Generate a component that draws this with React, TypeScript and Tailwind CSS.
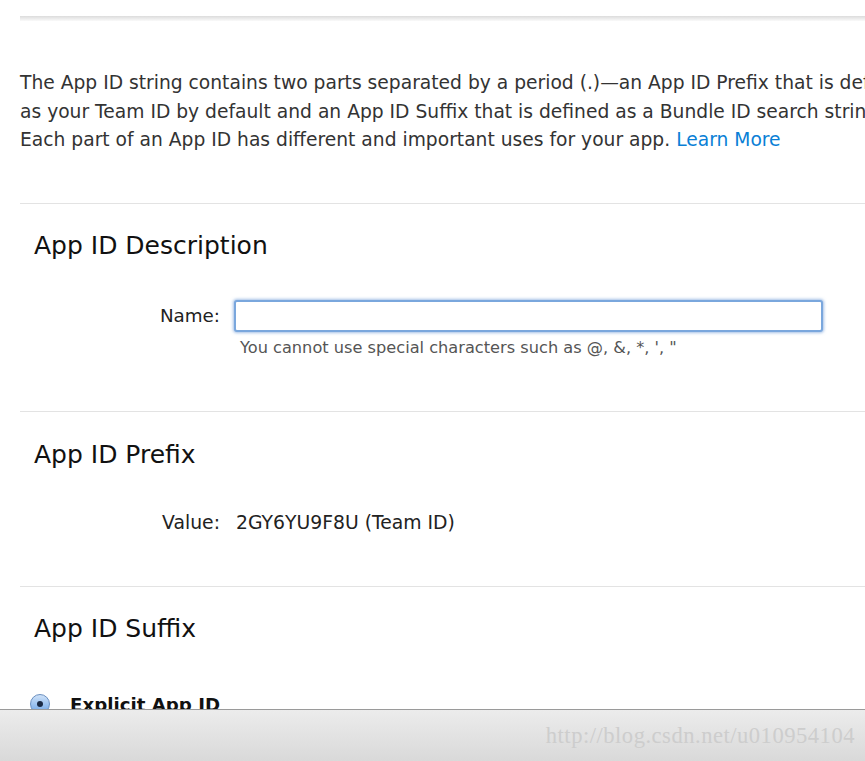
import React from "react";

const font = { fontFamily: '"DejaVu Sans", "Open Sans", sans-serif' };

function Divider() {
  return <div className="h-px bg-[#e3e3e3] ml-5" />;
}

export default function App() {
  return (
    <div className="w-[865px] h-[761px] overflow-hidden bg-white flex flex-col" style={font}>
      <div className="h-[709px] overflow-hidden">
        <div className="w-[1100px]">
          <div className="pt-[16px] pl-5">
            <div className="h-[5px] bg-gradient-to-b from-[#dcdcdc] to-[#fafafa]" />
          </div>

          <p className="pl-5 mt-[48px] text-[18.7px] leading-[28.5px] text-[#333]">
            The App ID string contains two parts separated by a period (.)—an App ID Prefix that is defined
            <br />
            as your Team ID by default and an App ID Suffix that is defined as a Bundle ID search string.
            <br />
            Each part of an App ID has different and important uses for your app.{" "}
            <span className="text-[#0a7fd6]">Learn More</span>
          </p>

          <div className="mt-[48px]">
            <Divider />
            <h2 className="pl-[34px] mt-[27px] text-[25px] leading-[30px] text-[#111]">App ID Description</h2>
            <div className="flex items-center mt-[39px]">
              <label className="w-[220px] text-right text-[18.3px] text-[#222]">Name:</label>
              <div className="ml-[14px] w-[589px] h-[32px] rounded-[3px] border-2 border-[#7aa7dd] shadow-[0_0_3px_1px_rgba(90,140,210,0.55)] bg-white" />
            </div>
            <div className="pl-[240px] mt-[4px] text-[16.2px] leading-[24px] text-[#555]">
              You cannot use special characters such as @, &amp;, *, ', "
            </div>
          </div>

          <div className="mt-[51px]">
            <Divider />
            <h2 className="pl-[34px] mt-[28px] text-[25px] leading-[30px] text-[#111]">App ID Prefix</h2>
            <div className="flex items-center mt-[40px] text-[18.8px] leading-[26px] text-[#222]">
              <span className="w-[220px] text-right">Value:</span>
              <span className="ml-[16px]">2GY6YU9F8U (Team ID)</span>
            </div>
          </div>

          <div className="mt-[50px]">
            <Divider />
            <h2 className="pl-[34px] mt-[27px] text-[25px] leading-[30px] text-[#111]">App ID Suffix</h2>
            <div className="flex items-center mt-[47px] pl-[30px]">
              <span className="w-[20px] h-[20px] rounded-full border border-[#6a8fc0] bg-gradient-to-b from-[#cfe2f8] to-[#6fa6e6] flex items-center justify-center">
                <span className="w-[6px] h-[6px] rounded-full bg-[#1a2a44]" />
              </span>
              <span className="ml-[20px] text-[18.2px] font-bold text-[#111]">Explicit App ID</span>
            </div>
          </div>
        </div>
      </div>

      <div className="flex-1 border-t border-[#9a9a9a] bg-gradient-to-b from-[#ececec] to-[#d9d9d9] flex items-center justify-end pr-[10px]">
        <span className="text-[22.6px] text-[#cdcdcd] tracking-[0.5px]" style={{ fontFamily: '"Liberation Serif", "DejaVu Serif", serif' }}>
          http://blog.csdn.net/u010954104
        </span>
      </div>
    </div>
  );
}
